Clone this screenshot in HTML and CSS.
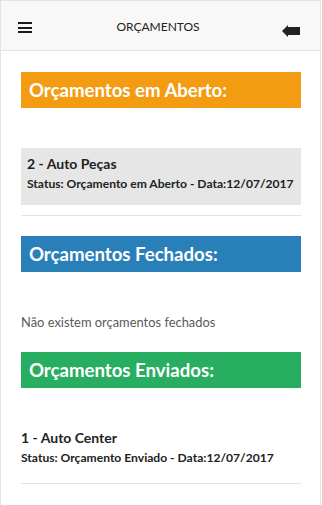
FILE: index.html
```html
<!DOCTYPE html>
<html lang="pt-BR">
<head>
    <meta charset="UTF-8">
    <meta name="viewport" content="width=device-width, initial-scale=1.0">
    <title>Orçamentos</title>
    <link rel="stylesheet" href="styles.css">
</head>
<body>

    <div class="app">
        <div class="navbar">
            <span class="menu-btn">
                <span></span><span></span><span></span>
            </span>
            <h1 class="nav-title">Orçamentos</h1>
            <span class="back-btn">
                <svg width="18" height="12" viewBox="0 0 18 12">
                    <polygon points="0,6 6,0 6,2 18,2 18,10 6,10 6,12" fill="#222"/>
                </svg>
            </span>
        </div>

        <div class="content">
            <!-- Abertos -->
            <h2 class="section-title aberto">Orçamentos em Aberto:</h2>
            <div class="budget budget-open">
                <h3>2 - Auto Peças</h3>
                <p>Status: Orçamento em Aberto - Data:12/07/2017</p>
            </div>
            <hr class="sep sep-open">

            <!-- Fechados -->
            <h2 class="section-title fechado">Orçamentos Fechados:</h2>
            <p class="empty">Não existem orçamentos fechados</p>

            <!-- Enviados -->
            <h2 class="section-title enviado">Orçamentos Enviados:</h2>
            <div class="budget budget-sent">
                <h3>1 - Auto Center</h3>
                <p>Status: Orçamento Enviado - Data:12/07/2017</p>
            </div>
            <hr class="sep sep-sent">
        </div>
    </div>

</body>
</html>
```

FILE: styles.css
```css
body {
    margin: 0;
    padding: 0;
    font-family: Lato, "Open Sans", sans-serif;
    background: #fff;
    color: #222;
}
.app {
    width: 319px;
    min-height: 505px;
    border-left: 1px solid #e3e3e3;
    border-right: 1px solid #e3e3e3;
    box-sizing: content-box;
}

/* Navbar */
.navbar {
    height: 49px;
    display: flex;
    align-items: center;
    justify-content: space-between;
    background: #f8f8f8;
    border-top: 1px solid #e3e3e3;
    border-bottom: 1px solid #e3e3e3;
    padding: 0 20px 0 17px;
}
.menu-btn {
    display: flex;
    flex-direction: column;
    gap: 2.5px;
    width: 14px;
    margin-top: 4px;
}
.menu-btn span {
    display: block;
    height: 2px;
    background: #1a1a1a;
}
.nav-title {
    margin: 2px 0 0 2px;
    font-size: 12px;
    font-weight: 400;
    text-transform: uppercase;
    color: #222;
}
.back-btn {
    display: flex;
    margin-top: 11px;
}

/* Content */
.content {
    padding: 0 19px 0 20px;
}
.section-title {
    margin: 0;
    height: 36px;
    line-height: 36px;
    padding: 0 8px;
    color: #fff;
    font-size: 18.6px;
    font-weight: 700;
}
.aberto {
    background: #f39c12;
    margin-top: 21px;
}
.fechado {
    background: #2980b9;
    margin-top: 20px;
}
.enviado {
    background: #27ae60;
    margin-top: 21px;
}

.budget h3 {
    margin: 0;
    font-size: 14px;
    line-height: 20px;
    font-weight: 700;
    color: #222;
}
.budget p {
    margin: 2px 0 0;
    font-size: 12.1px;
    line-height: 16px;
    font-weight: 700;
    color: #222;
}
.budget-open {
    background: #e6e6e6;
    margin-top: 40px;
    padding: 6px 6px 13px;
}
.budget-sent {
    margin-top: 40px;
}

.sep {
    border: none;
    border-top: 1px solid #e3e3e3;
    margin: 0;
}
.sep-open {
    margin-top: 10px;
}
.sep-sent {
    margin-top: 17px;
}

.empty {
    margin: 41px 0 0;
    font-size: 12.9px;
    line-height: 18px;
    color: #5a5a5a;
}
```
